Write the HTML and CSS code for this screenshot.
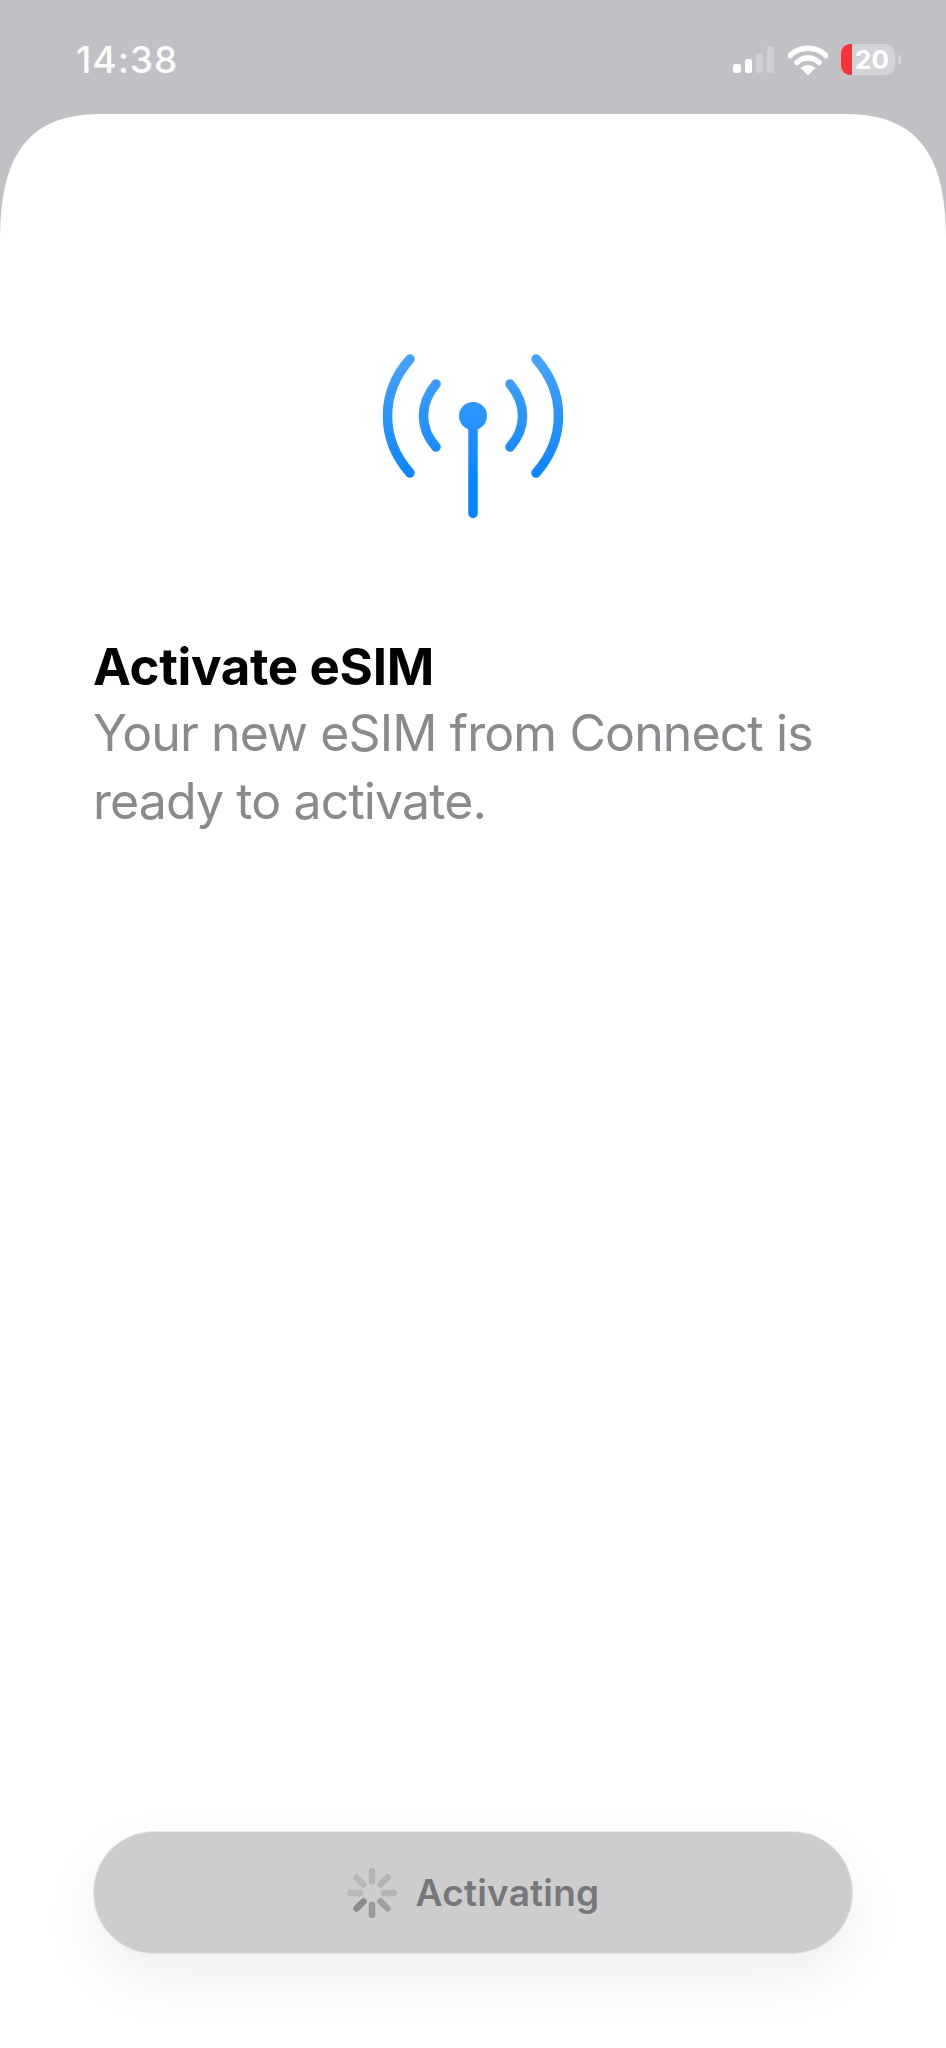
FILE: index.html
```html
<!DOCTYPE html>
<html lang="en">
<head>
    <meta charset="UTF-8">
    <meta name="viewport" content="width=device-width, initial-scale=1.0">
    <title>Activate eSIM</title>
    <link rel="stylesheet" href="styles.css">
</head>
<body>
    <!-- status bar -->
    <div class="status-bar">
        <span class="time">14:38</span>
        <div class="status-icons">
            <svg class="signal" width="41" height="27" viewBox="0 0 41 27">
                <rect x="0" y="18" width="8" height="9" rx="2.5" fill="#fff"/>
                <rect x="12" y="13" width="7" height="14" rx="2.5" fill="#fff"/>
                <rect x="23" y="7" width="7" height="20" rx="2.5" fill="#fff" opacity="0.25"/>
                <rect x="34" y="0" width="7" height="27" rx="2.5" fill="#fff" opacity="0.25"/>
            </svg>
            <svg class="wifi" width="40" height="30" viewBox="0 0 40 30">
                <path d="M2 10.500 A26 26 0 0 1 38 10.500" fill="none" stroke="#fff" stroke-width="5.500" stroke-linecap="round"/>
                <path d="M9 17.500 A16 16 0 0 1 31 17.500" fill="none" stroke="#fff" stroke-width="5.500" stroke-linecap="round"/>
                <path d="M13 23 Q20 18 27 23 L20 30 Z" fill="#fff" stroke="#fff" stroke-width="1" stroke-linejoin="round"/>
            </svg>
            <div class="battery">
                <div class="battery-body">
                    <div class="battery-fill"></div>
                    <span class="battery-level">20</span>
                </div>
                <div class="battery-tip"></div>
            </div>
        </div>
    </div>

    <!-- sheet -->
    <div class="sheet">
        <svg class="antenna" width="190" height="172" viewBox="0 0 190 172">
            <defs>
                <linearGradient id="antennaBlue" gradientUnits="userSpaceOnUse" x1="0" y1="0" x2="0" y2="172">
                    <stop offset="0" stop-color="#4aa5fb"/>
                    <stop offset="0.75" stop-color="#0a84ff"/>
                </linearGradient>
            </defs>
            <g fill="none" stroke="url(#antennaBlue)" stroke-width="9.500" stroke-linecap="round">
                <path d="M32 9 C2 43 2 89 32 123"/>
                <path d="M158 9 C188 43 188 89 158 123"/>
                <path d="M58 34 C41.300 54 41.300 78 58 97"/>
                <path d="M132 34 C148.700 54 148.700 78 132 97"/>
                <path d="M95 66 L95 163.500"/>
            </g>
            <circle cx="95" cy="66" r="14" fill="url(#antennaBlue)"/>
        </svg>

        <div class="intro">
            <h1>Activate eSIM</h1>
            <p>Your new eSIM from Connect is ready to activate.</p>
        </div>

        <div class="activate-btn">
            <svg class="spinner" width="50" height="50" viewBox="0 0 50 50">
                <g stroke-width="6.500" stroke-linecap="round">
                    <path d="M25 3 V13" stroke="#b4b4b4"/>
                    <path d="M40.500 9.500 L33.500 16.500" stroke="#b4b4b4"/>
                    <path d="M47 25 H37" stroke="#b4b4b4"/>
                    <path d="M40.500 40.500 L33.500 33.500" stroke="#a0a0a0"/>
                    <path d="M25 47 V37" stroke="#999"/>
                    <path d="M9.500 40.500 L16.500 33.500" stroke="#8c8c8c"/>
                    <path d="M3 25 H13" stroke="#b8b8b8"/>
                    <path d="M9.500 9.500 L16.500 16.500" stroke="#b8b8b8"/>
                </g>
            </svg>
            <span>Activating</span>
        </div>
    </div>
</body>
</html>
```

FILE: styles.css
```css
body {
    font-family: 'Inter', 'Liberation Sans', sans-serif;
    background-color: #c1c0c5;
    margin: 0;
    height: 2048px;
    overflow: hidden;
    display: flex;
    flex-direction: column;
}

.status-bar {
    height: 114px;
    flex-shrink: 0;
    box-sizing: border-box;
    padding: 44px 45px 0 76px;
    display: flex;
    justify-content: space-between;
    align-items: flex-start;
}

.time {
    color: #fbfbfb;
    font-size: 37px;
    font-weight: 500;
    line-height: 32px;
    letter-spacing: 1px;
}

.status-icons {
    display: flex;
    align-items: flex-start;
}

.signal {
    margin-top: 2px;
}

.wifi {
    margin-left: 14px;
    margin-top: 1px;
}

.battery {
    margin-left: 13px;
    display: flex;
    align-items: center;
}

.battery-body {
    position: relative;
    width: 54px;
    height: 31px;
    border-radius: 9px;
    background: #d4d3d7;
    overflow: hidden;
}

.battery-fill {
    width: 11px;
    height: 100%;
    background: #fb323a;
}

.battery-level {
    position: absolute;
    top: 0;
    left: 14px;
    color: #fff;
    font-size: 26px;
    font-weight: 700;
    line-height: 31px;
}

.battery-tip {
    width: 3px;
    height: 9px;
    margin-left: 3px;
    border-radius: 0 2px 2px 0;
    background: #d4d3d7;
}

.sheet {
    flex: 1;
    display: flex;
    flex-direction: column;
    align-items: center;
    box-sizing: border-box;
    padding: 236px 94px 95px 93px;
    background: #fff;
    clip-path: path("M0 128 C0 58 16 0 100 0 L846 0 C930 0 946 58 946 128 L946 1934 L0 1934 Z");
}

.antenna {
    display: block;
}

.intro {
    align-self: stretch;
    margin-top: 111px;
}

h1 {
    margin: 0;
    color: #000;
    font-size: 51px;
    font-weight: 700;
    line-height: 68px;
    letter-spacing: -0.35px;
}

p {
    margin: -2px 0 0;
    color: #8a8a8e;
    font-size: 50px;
    font-weight: 400;
    line-height: 68px;
    letter-spacing: -0.9px;
}

.activate-btn {
    margin-top: auto;
    margin-left: 1px;
    align-self: stretch;
    height: 121px;
    display: flex;
    align-items: center;
    justify-content: center;
    gap: 19px;
    background: #cdcdcd;
    border-radius: 60px;
    box-shadow: 0 0 0 1px #e6e6e6, 0 24px 60px rgba(0,0,0,0.07);
    color: #77777b;
    font-size: 37px;
    font-weight: 600;
    letter-spacing: 0.2px;
}

.spinner {
    display: block;
}
```
